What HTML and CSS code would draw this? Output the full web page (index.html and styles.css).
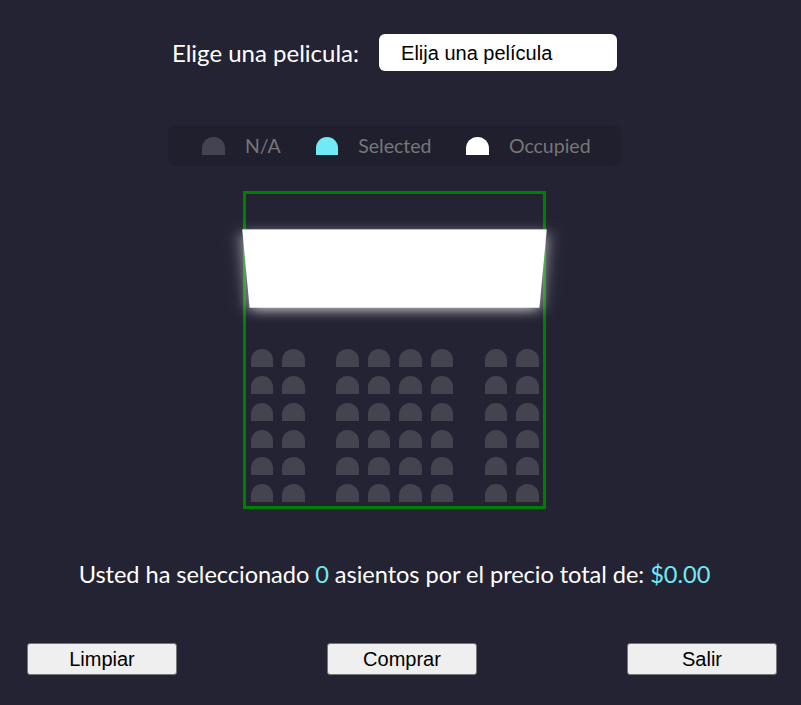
FILE: index.html
```html
<!DOCTYPE html>
<html lang="es">
<head>
<meta charset="utf-8">
<title>Cine</title>
<link rel="stylesheet" href="styles.css">
</head>
<body>
<div class="main">
  <div class="movie-row">
    <label class="movie-label" for="movie">Elige una pelicula:</label>
    <select id="movie" class="movie-select">
      <option>Elija una película</option>
    </select>
  </div>

  <ul class="showcase">
    <li class="legend-item"><span class="seat"></span><small class="legend-text">N/A</small></li>
    <li class="legend-item"><span class="seat selected"></span><small class="legend-text">Selected</small></li>
    <li class="legend-item"><span class="seat occupied"></span><small class="legend-text">Occupied</small></li>
  </ul>

  <div class="theatre">
    <div class="screen"></div>
    <div class="row"><span class="seat"></span><span class="seat"></span><span class="seat"></span><span class="seat"></span><span class="seat"></span><span class="seat"></span><span class="seat"></span><span class="seat"></span></div>
    <div class="row"><span class="seat"></span><span class="seat"></span><span class="seat"></span><span class="seat"></span><span class="seat"></span><span class="seat"></span><span class="seat"></span><span class="seat"></span></div>
    <div class="row"><span class="seat"></span><span class="seat"></span><span class="seat"></span><span class="seat"></span><span class="seat"></span><span class="seat"></span><span class="seat"></span><span class="seat"></span></div>
    <div class="row"><span class="seat"></span><span class="seat"></span><span class="seat"></span><span class="seat"></span><span class="seat"></span><span class="seat"></span><span class="seat"></span><span class="seat"></span></div>
    <div class="row"><span class="seat"></span><span class="seat"></span><span class="seat"></span><span class="seat"></span><span class="seat"></span><span class="seat"></span><span class="seat"></span><span class="seat"></span></div>
    <div class="row"><span class="seat"></span><span class="seat"></span><span class="seat"></span><span class="seat"></span><span class="seat"></span><span class="seat"></span><span class="seat"></span><span class="seat"></span></div>
  </div>

  <p class="summary">Usted ha seleccionado <span class="hl">0</span> asientos por el precio total de: <span class="hl">$0.00</span></p>
</div>

<div class="actions">
  <button class="btn" type="button">Limpiar</button>
  <button class="btn" type="button">Comprar</button>
  <button class="btn" type="button">Salir</button>
</div>
</body>
</html>
```

FILE: styles.css
```css
* {
  box-sizing: border-box;
}

html, body {
  margin: 0;
  padding: 0;
}

body {
  background: #242333;
  color: #fff;
  font-family: Lato, "Open Sans", sans-serif;
  height: 705px;
  overflow: hidden;
}

.main {
  width: 789px;
  display: flex;
  flex-direction: column;
  align-items: center;
}

.movie-row {
  margin-top: 34px;
  height: 37px;
  display: flex;
  align-items: center;
}

.movie-label {
  font-size: 24px;
  line-height: 37px;
}

.movie-select {
  -webkit-appearance: none;
  appearance: none;
  margin-left: 20px;
  width: 238px;
  height: 37px;
  border: 0;
  border-radius: 6px;
  background: #fff;
  color: #000;
  font-family: "Liberation Sans", Arial, sans-serif;
  font-size: 20px;
  padding: 0 22px;
  outline: none;
}

.showcase {
  list-style: none;
  margin: 54px 0 0;
  height: 41px;
  padding: 0 30px 0 34px;
  display: flex;
  align-items: center;
  background: rgba(0, 0, 0, 0.1);
  border-radius: 7px;
}

.legend-item {
  display: flex;
  align-items: center;
}

.legend-item + .legend-item {
  margin-left: 35px;
}

.legend-text {
  margin-left: 20px;
  font-size: 19.5px;
  color: #777;
}

.seat {
  display: block;
  width: 22.5px;
  height: 18px;
  background: #444451;
  border-top-left-radius: 15px;
  border-top-right-radius: 15px;
}

.seat.selected {
  background: #6feaf6;
}

.seat.occupied {
  background: #fff;
}

.theatre {
  margin-top: 25px;
  border: 3px solid #008000;
  perspective: 1500px;
}

.screen {
  background: #fff;
  height: 105px;
  width: 100%;
  margin: 22.5px 0;
  transform: rotateX(-45deg);
  box-shadow: 0 4.5px 15px rgba(255, 255, 255, 0.7);
}

.row {
  display: flex;
}

.row .seat {
  margin: 4.5px;
}

.row .seat:nth-of-type(2) {
  margin-right: 27px;
}

.row .seat:nth-last-of-type(2) {
  margin-left: 27px;
}

.summary {
  margin: 51px 0 0;
  font-size: 23.6px;
  letter-spacing: -0.05px;
  line-height: 29px;
}

.hl {
  color: #6feaf6;
}

.actions {
  margin-top: 54px;
  display: flex;
  justify-content: space-between;
  padding: 0 24px 0 27px;
}

.btn {
  width: 150px;
  height: 32px;
  background: #efefef;
  border: 1px solid #767676;
  border-radius: 3px;
  color: #000;
  font-family: "Liberation Sans", Arial, sans-serif;
  font-size: 20px;
  padding: 0;
}
```
